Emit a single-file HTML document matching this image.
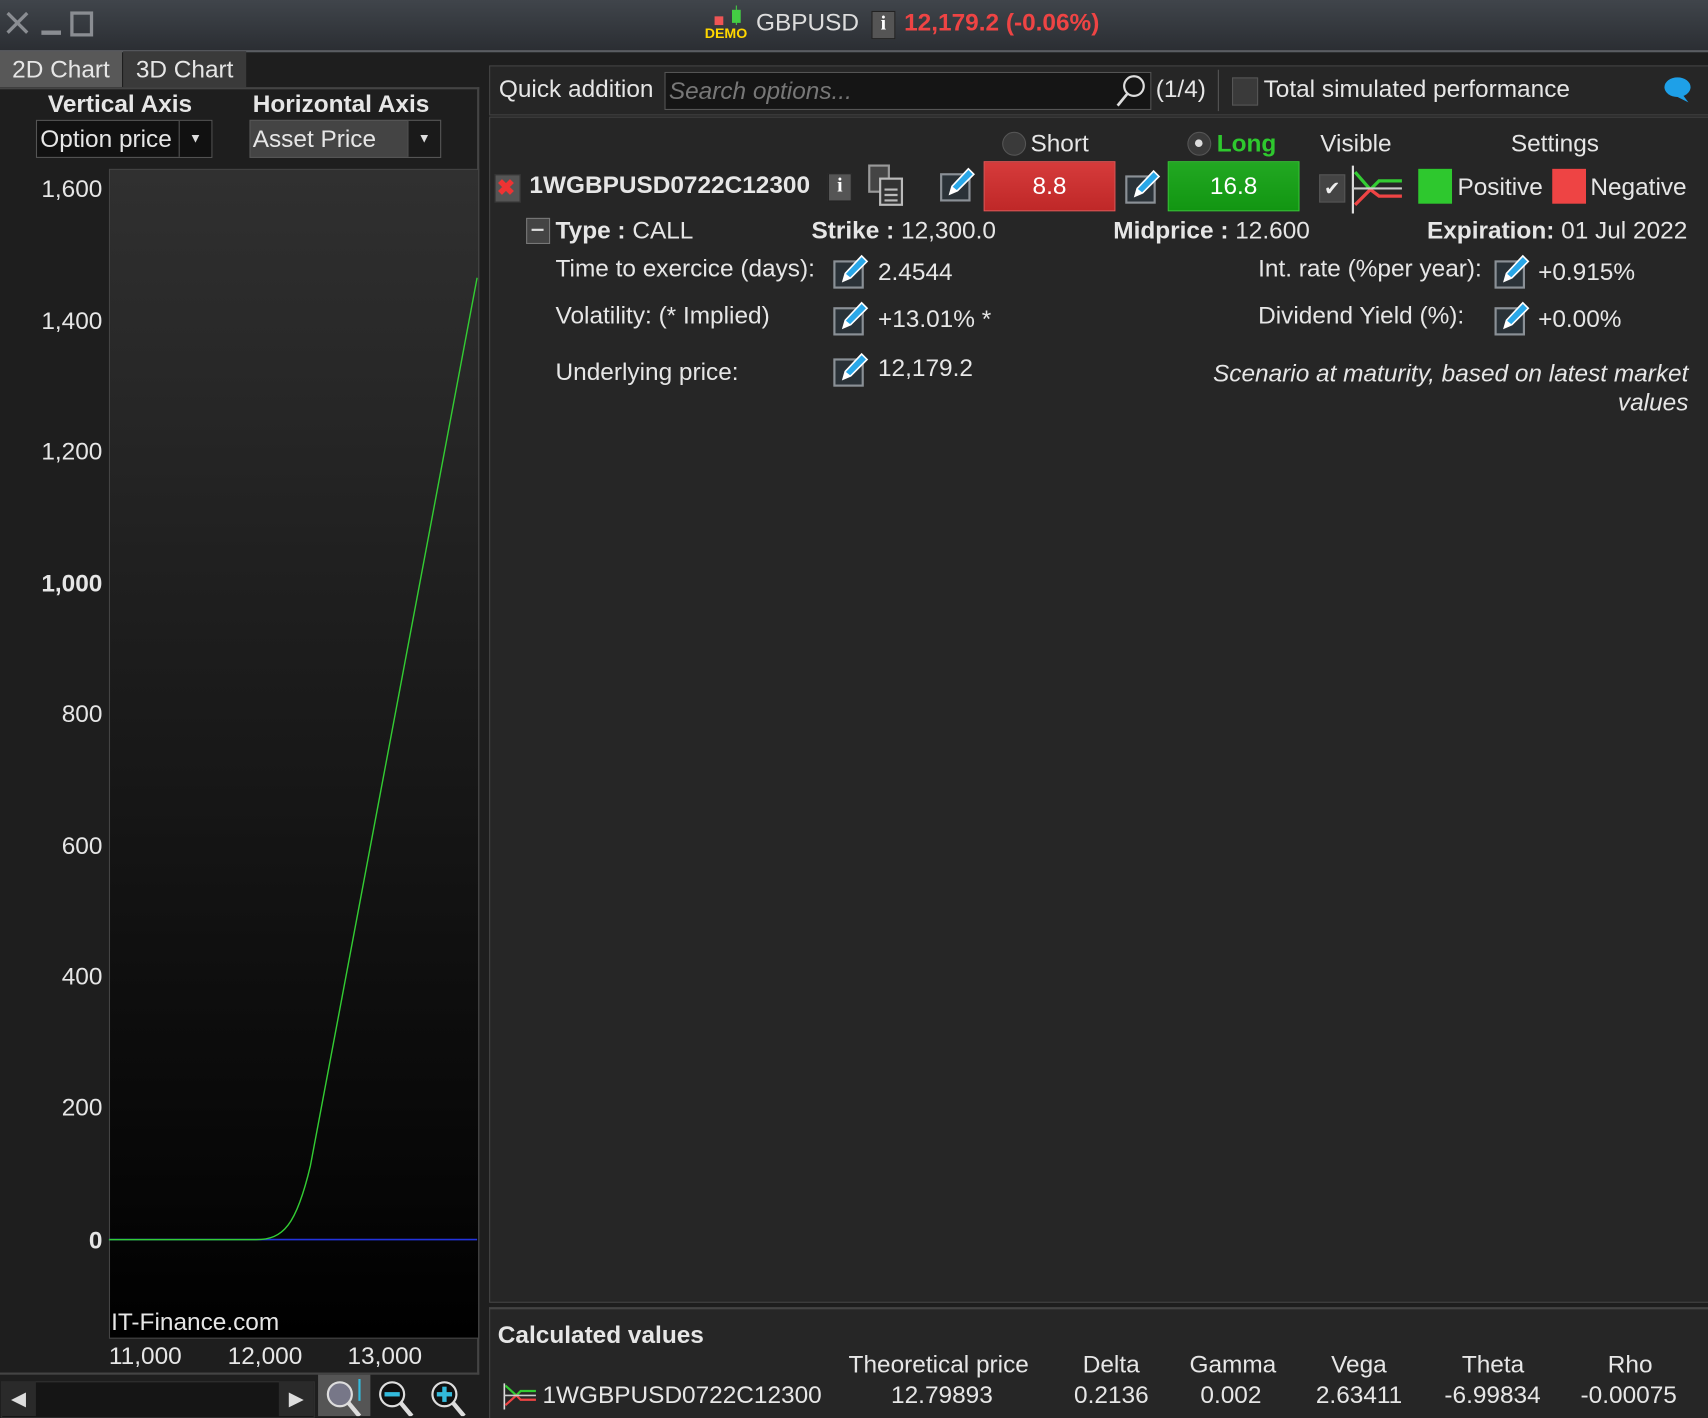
<!DOCTYPE html>
<html><head><meta charset="utf-8"><style>
html,body{margin:0;padding:0;background:#1e1e1e;overflow:hidden;width:1708px;height:1416px}
#w{position:absolute;left:0;top:0;width:1568px;height:1300px;transform:scale(1.08929);transform-origin:0 0;font-family:"Liberation Sans",sans-serif;color:#e6e6e6;font-size:22.4px;background:#1e1e1e}
.a{position:absolute;white-space:nowrap}
.b{font-weight:bold}
.pen{position:absolute;width:34px;height:34px}
</style></head><body><div id="w">
<div class="a" style="left:0;top:0;width:1568px;height:46px;background:linear-gradient(#40454b,#2b2e33);border-bottom:2px solid #5a5d62"></div>
<svg class="a" style="left:4px;top:8px" width="90" height="30"><path d="M3 4 L21 22 M21 4 L3 22" stroke="#8a8d92" stroke-width="3"/><rect x="34" y="20" width="18" height="4" fill="#8a8d92"/><rect x="62" y="4" width="18" height="20" fill="none" stroke="#8a8d92" stroke-width="3"/></svg>
<svg class="a" style="left:646px;top:5px" width="46" height="32"><rect x="10" y="10" width="8" height="8" fill="#e55"/><rect x="26" y="4" width="8" height="12" fill="#4c4"/><line x1="30" y1="0" x2="30" y2="18" stroke="#4c4"/><text x="1" y="30" font-size="13" font-weight="bold" fill="#ffd700" font-family="Liberation Sans">DEMO</text></svg>
<div class="a" style="left:694px;top:8px;color:#ddd">GBPUSD</div>
<div class="a" style="left:800px;top:10px;width:20px;height:24px;background:#555;border:1px solid #222;color:#fff;font:bold 18px 'Liberation Serif';text-align:center">i</div>
<div class="a b" style="left:830px;top:8px;color:#ee4444">12,179.2 (-0.06%)</div>
<div class="a" style="left:0;top:47px;width:112px;height:33px;background:#585858;text-align:center;line-height:33px">2D Chart</div>
<div class="a" style="left:113px;top:47px;width:113px;height:33px;background:#3a3a3a;text-align:center;line-height:33px">3D Chart</div>
<div class="a" style="left:0;top:80px;width:438px;height:1180px;border-right:2px solid #444;border-top:2px solid #444;background:#1e1e1e"></div>
<div class="a b" style="left:44px;top:83px">Vertical Axis</div>
<div class="a b" style="left:232px;top:83px">Horizontal Axis</div>
<div class="a" style="left:33px;top:110px;width:160px;height:33px;background:#111;border:1px solid #555"><span class="a" style="left:3px;top:4px">Option price</span><div class="a" style="right:0;top:0;width:29px;height:33px;background:#111;border-left:1px solid #555;color:#ddd;text-align:center;font-size:12px;line-height:33px">▼</div></div>
<div class="a" style="left:229px;top:110px;width:174px;height:33px;background:#444;border:1px solid #555"><span class="a" style="left:2px;top:4px">Asset Price</span><div class="a" style="right:0;top:0;width:29px;height:33px;background:#1a1a1a;border-left:1px solid #555;color:#ddd;text-align:center;font-size:12px;line-height:33px">▼</div></div>
<div class="a" style="left:100px;top:155px;width:338px;height:1072px;background:linear-gradient(#303030,#000);border:1px solid #444"></div>
<div class="a" style="left:0;top:161px;width:94px;text-align:right">1,600</div>
<div class="a" style="left:0;top:282px;width:94px;text-align:right">1,400</div>
<div class="a" style="left:0;top:402px;width:94px;text-align:right">1,200</div>
<div class="a b" style="left:0;top:523px;width:94px;text-align:right">1,000</div>
<div class="a" style="left:0;top:643px;width:94px;text-align:right">800</div>
<div class="a" style="left:0;top:764px;width:94px;text-align:right">600</div>
<div class="a" style="left:0;top:884px;width:94px;text-align:right">400</div>
<div class="a" style="left:0;top:1004px;width:94px;text-align:right">200</div>
<div class="a b" style="left:0;top:1126px;width:94px;text-align:right">0</div>
<svg class="a" style="left:0;top:0" width="440" height="1260"><line x1="100" y1="1138" x2="438" y2="1138" stroke="#2233dd" stroke-width="1.5"/><path d="M100 1138 L235 1138 C260 1138 272 1125 285 1070 L438 255" stroke="#33cc33" stroke-width="1.3" fill="none"/></svg>
<div class="a" style="left:102px;top:1201px">IT-Finance.com</div>
<div class="a" style="left:100px;top:1232px">11,000</div>
<div class="a" style="left:209px;top:1232px">12,000</div>
<div class="a" style="left:319px;top:1232px">13,000</div>
<div class="a" style="left:0;top:1260px;width:440px;height:2px;background:#444"></div>
<div class="a" style="left:1px;top:1268px;width:286px;height:32px;background:#151515;border:1px solid #333"></div>
<div class="a" style="left:1px;top:1268px;width:32px;height:32px;background:#2a2a2a;color:#ddd;font-size:18px;text-align:center;line-height:32px">◀</div>
<div class="a" style="left:256px;top:1268px;width:32px;height:32px;background:#2a2a2a;color:#ddd;font-size:18px;text-align:center;line-height:32px">▶</div>
<div class="a" style="left:292px;top:1262px;width:48px;height:38px;background:#555"></div>
<svg class="a" style="left:292px;top:1262px" width="150" height="38"><circle cx="20" cy="18" r="11" fill="#778" stroke="#ddd" stroke-width="2"/><line x1="28" y1="26" x2="38" y2="38" stroke="#ddd" stroke-width="4"/><line x1="38" y1="4" x2="38" y2="24" stroke="#3bd" stroke-width="2"/>
<circle cx="68" cy="18" r="11" fill="#111" stroke="#ddd" stroke-width="2"/><rect x="61" y="16" width="14" height="4" fill="#3bd"/><line x1="76" y1="26" x2="86" y2="38" stroke="#ddd" stroke-width="4"/>
<circle cx="116" cy="18" r="11" fill="#111" stroke="#ddd" stroke-width="2"/><rect x="109" y="16" width="14" height="4" fill="#3bd"/><rect x="114" y="11" width="4" height="14" fill="#3bd"/><line x1="124" y1="26" x2="134" y2="38" stroke="#ddd" stroke-width="4"/></svg>
<div class="a" style="left:449px;top:60px;width:1119px;height:44px;background:#262626;border:1px solid #444"></div>
<div class="a" style="left:458px;top:69px">Quick addition</div>
<div class="a" style="left:610px;top:66px;width:445px;height:33px;background:#151515;border:1px solid #555"></div>
<div class="a" style="left:614px;top:71px;color:#777;font-style:italic">Search options...</div>
<svg class="a" style="left:1022px;top:66px" width="34" height="34"><circle cx="19" cy="13" r="9" fill="none" stroke="#ddd" stroke-width="2"/><line x1="13" y1="20" x2="4" y2="31" stroke="#ddd" stroke-width="2.5"/></svg>
<div class="a" style="left:1061px;top:69px">(1/4)</div>
<div class="a" style="left:1118px;top:64px;width:1px;height:38px;background:#555"></div>
<div class="a" style="left:1131px;top:71px;width:22px;height:24px;background:#3a3a3a;border:1px solid #555"></div>
<div class="a" style="left:1160px;top:69px">Total simulated performance</div>
<svg class="a" style="left:1526px;top:68px" width="30" height="28"><ellipse cx="14" cy="12" rx="12" ry="9" fill="#1ea0e8"/><path d="M18 18 L24 26 L12 20Z" fill="#1ea0e8"/></svg>
<div class="a" style="left:449px;top:107px;width:1119px;height:1087px;background:#262626;border:1px solid #444"></div>
<div class="a" style="left:920px;top:121px;width:20px;height:20px;border-radius:50%;background:#3a3a3a;border:1px solid #555"></div>
<div class="a" style="left:946px;top:119px">Short</div>
<div class="a" style="left:1090px;top:121px;width:20px;height:20px;border-radius:50%;background:#3a3a3a;border:1px solid #555"></div>
<div class="a" style="left:1097px;top:128px;width:7px;height:7px;border-radius:50%;background:#ddd"></div>
<div class="a b" style="left:1117px;top:119px;color:#2ec82e">Long</div>
<div class="a" style="left:1212px;top:119px">Visible</div>
<div class="a" style="left:1387px;top:119px">Settings</div>
<div class="a" style="left:454px;top:160px;width:22px;height:24px;background:#555;border:1px solid #333"></div>
<div class="a b" style="left:456px;top:160px;color:#e33;font-size:20px">✖</div>
<div class="a b" style="left:486px;top:157px">1WGBPUSD0722C12300</div>
<div class="a" style="left:760px;top:159px;width:20px;height:24px;background:#555;border:1px solid #222;color:#fff;font:bold 18px 'Liberation Serif';text-align:center">i</div>
<svg class="a" style="left:796px;top:150px" width="36" height="40"><rect x="2" y="2" width="18" height="24" fill="#444" stroke="#999" stroke-width="2"/><rect x="12" y="14" width="20" height="24" fill="#333" stroke="#bbb" stroke-width="2"/><path d="M16 24h12M16 29h12M16 34h12" stroke="#bbb" stroke-width="2"/></svg>
<svg width="0" height="0" style="position:absolute"><defs><symbol id="pen" viewBox="0 0 34 34"><rect x="2" y="8" width="26" height="24" fill="#2a3238" stroke="#8a9096" stroke-width="2"/><path d="M10 26 L12 19 L27 3 L32 8 L17 23Z" fill="#29a7e8" stroke="#fff" stroke-width="1.5"/><path d="M10 26 L12 19 L17 23Z" fill="#fff"/></symbol></defs></svg>
<svg class="pen" style="left:862px;top:152px"><use href="#pen"/></svg>
<div class="a" style="left:903px;top:148px;width:119px;height:44px;background:linear-gradient(#d63b3b,#bf2828);border:1px solid #e55;text-align:center;line-height:44px;color:#fff">8.8</div>
<svg class="pen" style="left:1032px;top:154px"><use href="#pen"/></svg>
<div class="a" style="left:1072px;top:148px;width:119px;height:44px;background:linear-gradient(#22a822,#129612);border:1px solid #3c3;text-align:center;line-height:44px;color:#fff">16.8</div>
<div class="a" style="left:1211px;top:160px;width:22px;height:24px;background:#444;border:1px solid #555;color:#eee;text-align:center;font-size:18px;line-height:24px">✔</div>
<svg class="a" style="left:1240px;top:150px" width="50" height="46"><line x1="2" y1="2" x2="2" y2="46" stroke="#ddd" stroke-width="2"/><path d="M4 8 L18 24 L26 16 L47 16" stroke="#3c3" stroke-width="3" fill="none"/><path d="M4 38 L18 24 L26 30 L47 30" stroke="#e44" stroke-width="3" fill="none"/><line x1="2" y1="23" x2="47" y2="23" stroke="#ccc" stroke-width="2"/></svg>
<div class="a" style="left:1302px;top:155px;width:31px;height:32px;background:#2ec82e"></div>
<div class="a" style="left:1338px;top:159px">Positive</div>
<div class="a" style="left:1425px;top:155px;width:31px;height:32px;background:#ee4444"></div>
<div class="a" style="left:1460px;top:159px">Negative</div>
<div class="a" style="left:483px;top:200px;width:20px;height:22px;background:#444;border:1px solid #777"></div>
<div class="a" style="left:488px;top:210px;width:11px;height:2px;background:#ddd"></div>
<div class="a" style="left:510px;top:199px"><b>Type :</b> CALL</div>
<div class="a" style="left:745px;top:199px"><b>Strike :</b> 12,300.0</div>
<div class="a" style="left:1022px;top:199px"><b>Midprice :</b> 12.600</div>
<div class="a" style="left:1310px;top:199px"><b>Expiration:</b> 01 Jul 2022</div>
<div class="a" style="left:510px;top:234px">Time to exercice (days):</div>
<svg class="pen" style="left:764px;top:232px"><use href="#pen"/></svg>
<div class="a" style="left:806px;top:237px">2.4544</div>
<div class="a" style="left:1155px;top:234px">Int. rate (%per year):</div>
<svg class="pen" style="left:1371px;top:232px"><use href="#pen"/></svg>
<div class="a" style="left:1412px;top:237px">+0.915%</div>
<div class="a" style="left:510px;top:277px">Volatility: (* Implied)</div>
<svg class="pen" style="left:764px;top:275px"><use href="#pen"/></svg>
<div class="a" style="left:806px;top:280px">+13.01% *</div>
<div class="a" style="left:1155px;top:277px">Dividend Yield (%):</div>
<svg class="pen" style="left:1371px;top:275px"><use href="#pen"/></svg>
<div class="a" style="left:1412px;top:280px">+0.00%</div>
<div class="a" style="left:510px;top:329px">Underlying price:</div>
<svg class="pen" style="left:764px;top:322px"><use href="#pen"/></svg>
<div class="a" style="left:806px;top:325px">12,179.2</div>
<div class="a" style="left:1060px;top:329px;width:490px;text-align:right;font-style:italic;white-space:normal;line-height:27px">Scenario at maturity, based on latest market values</div>
<div class="a" style="left:449px;top:1200px;width:1119px;height:100px;background:#262626;border-top:2px solid #444;border-left:1px solid #444"></div>
<div class="a b" style="left:457px;top:1213px">Calculated values</div>
<div class="a" style="left:779px;top:1240px">Theoretical price</div>
<div class="a" style="left:994px;top:1240px">Delta</div>
<div class="a" style="left:1092px;top:1240px">Gamma</div>
<div class="a" style="left:1222px;top:1240px">Vega</div>
<div class="a" style="left:1342px;top:1240px">Theta</div>
<div class="a" style="left:1476px;top:1240px">Rho</div>
<svg class="a" style="left:462px;top:1268px" width="32" height="26"><line x1="1" y1="2" x2="1" y2="26" stroke="#ddd" stroke-width="1.5"/><path d="M2 4 L12 13 L16 9 L30 9" stroke="#3c3" stroke-width="2" fill="none"/><path d="M2 22 L12 13 L16 17 L30 17" stroke="#e44" stroke-width="2" fill="none"/><line x1="1" y1="13" x2="30" y2="13" stroke="#ccc" stroke-width="1.5"/></svg>
<div class="a" style="left:498px;top:1268px">1WGBPUSD0722C12300</div>
<div class="a" style="left:818px;top:1268px">12.79893</div>
<div class="a" style="left:986px;top:1268px">0.2136</div>
<div class="a" style="left:1102px;top:1268px">0.002</div>
<div class="a" style="left:1208px;top:1268px">2.63411</div>
<div class="a" style="left:1326px;top:1268px">-6.99834</div>
<div class="a" style="left:1451px;top:1268px">-0.00075</div>
</div></body></html>
